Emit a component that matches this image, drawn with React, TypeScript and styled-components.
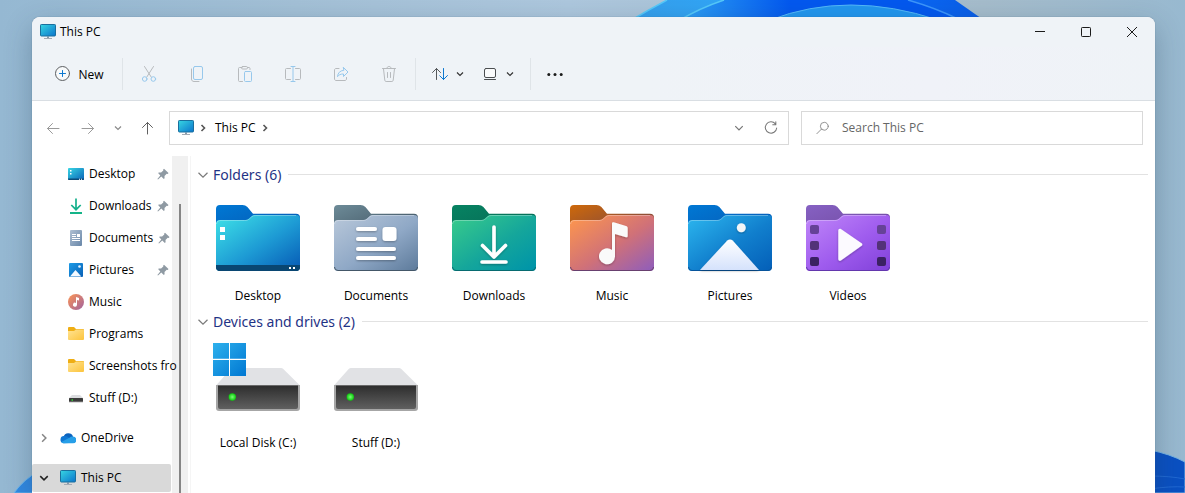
import React from 'react';
import styled, { createGlobalStyle } from 'styled-components';

const GlobalStyle = createGlobalStyle`
  *, *::before, *::after { box-sizing: border-box; }
  html, body { margin: 0; height: 100%; overflow: hidden; }
  body {
    font-family: 'Segoe UI', 'Open Sans', 'Noto Sans', sans-serif;
    font-size: 12px;
    line-height: 16px;
    color: #000;
  }
  button, input { font: inherit; color: inherit; }
  svg { display: block; flex: none; }
`;

/* ---------- layout ---------- */

const Desktop = styled.div`
  position: relative;
  display: flex;
  height: 100vh;
  padding: 17px 30px 0 32px;
  overflow: hidden;
  background: linear-gradient(90deg, #95b8d2 0%, #a3c0d6 25%, #adc7dd 48%, #a5bccb 83%, #98b9d0 100%);
`;

const Wallpaper = styled.svg`
  position: absolute;
  inset: 0;
  width: 100%;
  height: 100%;
`;

const Window = styled.main`
  position: relative;
  flex: 1;
  min-width: 0;
  display: flex;
  flex-direction: column;
  overflow: hidden;
  border-radius: 8px 8px 0 0;
  background: #fff;
  box-shadow: 0 0 1px rgba(60, 90, 115, 0.8), 0 10px 28px rgba(30, 60, 85, 0.32);
`;

const TitleBar = styled.header`
  display: flex;
  align-items: center;
  height: 30px;
  flex: none;
  background: #eff3f7;
`;

const WindowTitle = styled.h1`
  flex: 1;
  display: flex;
  align-items: center;
  gap: 4px;
  margin: 0;
  padding-left: 8px;
  font-size: 12px;
  font-weight: 400;
`;

const PlainButton = styled.button`
  display: flex;
  align-items: center;
  justify-content: center;
  padding: 0;
  border: 0;
  background: transparent;
`;

const CaptionButton = styled(PlainButton)`
  width: 46px;
  height: 30px;
`;

const Toolbar = styled.div`
  display: flex;
  align-items: center;
  height: 54px;
  flex: none;
  padding-left: 12px;
  background: linear-gradient(90deg, #eff3f7 55%, #f0f2f8 80%, #eff3f7);
  border-bottom: 1px solid #d9dee3;
`;

const ToolButton = styled(PlainButton)<{ $width: number }>`
  width: ${(p) => p.$width}px;
  height: 32px;
  gap: 8px;
`;

const NewButton = styled(ToolButton)`
  margin-right: 6px;
`;

const NewLabel = styled.span`
  padding-top: 2px;
`;

const ToolDivider = styled.span`
  width: 1px;
  height: 32px;
  margin: 0 2px;
  background: #dfe4e8;
`;

const ToolGroup = styled.div`
  display: flex;
  padding: 0 5px;
`;

const AddressRow = styled.div`
  display: flex;
  flex: none;
  padding: 10px 12px 11px 0;
`;

const NavButtons = styled.nav`
  display: flex;
  width: 137px;
  padding-left: 3px;
`;

const NavButton = styled(PlainButton)<{ $width: number }>`
  width: ${(p) => p.$width}px;
  height: 34px;
`;

const AddressBox = styled.div`
  flex: 1;
  display: flex;
  align-items: center;
  height: 34px;
  padding: 0 1px 0 8px;
  border: 1px solid #d9d9d9;
`;

const CrumbArrow = styled.span`
  margin: 0 8px 0 5px;
`;

const Crumb = styled.a`
  color: #000;
  text-decoration: none;
`;

const BoxButton = styled(PlainButton)<{ $push?: boolean }>`
  width: 32px;
  height: 32px;
  margin-left: ${(p) => (p.$push ? 'auto' : '0')};
`;

const SearchBox = styled.label`
  display: flex;
  align-items: center;
  gap: 12px;
  width: 342px;
  height: 34px;
  margin-left: 12px;
  padding-left: 14px;
  border: 1px solid #d9d9d9;
`;

const SearchInput = styled.input`
  flex: 1;
  min-width: 0;
  padding: 0;
  border: 0;
  outline: 0;
  background: transparent;
  &::placeholder { color: #666; opacity: 1; }
`;

const Body = styled.div`
  flex: 1;
  min-height: 0;
  display: flex;
  overflow: hidden;
`;

const Sidebar = styled.nav`
  position: relative;
  width: 140px;
  flex: none;
  padding: 2px 1px 0 0;
`;

const TreeList = styled.ul`
  margin: 0 0 8px;
  padding: 0;
  list-style: none;
`;

const TreeLink = styled.a<{ $nested?: boolean; $selected?: boolean }>`
  display: flex;
  align-items: center;
  gap: 5px;
  height: 28px;
  margin: 2px 0;
  padding-left: ${(p) => (p.$nested ? 36 : 4)}px;
  border-radius: 2px;
  background: ${(p) => (p.$selected ? '#d9d9d9' : 'transparent')};
  color: #000;
  text-decoration: none;
  white-space: nowrap;
`;

const TreeItem = styled.li`
  display: flow-root;
`;

const TreeArrow = styled.span`
  width: 19px;
  display: flex;
  padding-left: 3px;
`;

const PinSlot = styled.span`
  margin-left: auto;
  padding-right: 2px;
`;

const ScrollTrack = styled.div`
  width: 16px;
  flex: none;
  padding: 48px 7px 0;
  background: #f0f0f0;
`;

const ScrollThumb = styled.div`
  width: 2px;
  height: 100%;
  background: #858585;
`;

const Content = styled.section`
  flex: 1;
  min-width: 0;
  margin-left: 2px;
  padding: 4px 7px 0 6px;
  border-left: 1px solid #f5f5f5;
`;

const GroupHeader = styled.h2`
  display: flex;
  align-items: center;
  gap: 4px;
  height: 30px;
  margin: 0;
  padding-bottom: 1px;
  font-family: 'Segoe UI', 'Noto Sans', 'Open Sans', sans-serif;
  font-size: 14px;
  line-height: 20px;
  font-weight: 400;
  color: #1f3385;
  &::after {
    content: '';
    flex: 1;
    height: 1px;
    margin-left: 3px;
    background: #e2e2e2;
  }
`;

const TileGrid = styled.ul`
  display: flex;
  flex-wrap: wrap;
  margin: 0;
  padding: 0 0 0 2px;
  list-style: none;
`;

const Tile = styled.li`
  display: flex;
  flex-direction: column;
  align-items: center;
  width: 118px;
  height: 117px;
`;

const TileLabel = styled.span`
  margin-top: 2px;
`;

/* ---------- small icons ---------- */

const Monitor = ({ id }: { id: string }) => (
  <svg width="16" height="16" viewBox="0 0 16 16" aria-hidden="true">
    <defs>
      <linearGradient id={id} x1="0" y1="0" x2="1" y2="1">
        <stop offset="0" stopColor="#37d6e2" />
        <stop offset="1" stopColor="#0b74cc" />
      </linearGradient>
    </defs>
    <path d="M7 12.500h2v2H7z" fill="#8b99a8" />
    <path d="M4 14h8v1H4z" fill="#a3abb4" />
    <rect x="0.500" y="0.500" width="15" height="11.500" rx="0.800" fill={`url(#${id})`} stroke="#1a6f9d" />
  </svg>
);

const Chevron = ({ dir, size = 8, color = '#444', weight = 1.2 }: {
  dir: 'down' | 'right';
  size?: number;
  color?: string;
  weight?: number;
}) => (
  <svg width={size} height={size} viewBox="0 0 8 8" fill="none" stroke={color} strokeWidth={weight} aria-hidden="true">
    <path d={dir === 'down' ? 'M1 2.500L4 5.500L7 2.500' : 'M2.500 1L5.500 4L2.500 7'} />
  </svg>
);

const gray = '#b7babd';
const sky = '#97c8ec';

const Line = ({ children, size = 16 }: { children: React.ReactNode; size?: number }) => (
  <svg
    width={size}
    height={size}
    viewBox="0 0 16 16"
    fill="none"
    strokeLinecap="round"
    strokeLinejoin="round"
    aria-hidden="true"
  >
    {children}
  </svg>
);

const NewIcon = () => (
  <Line>
    <circle cx="8.500" cy="7.500" r="7" stroke="#5b5e61" fill="#f8fafb" />
    <path d="M8.500 4.500v6M5.500 7.500h6" stroke="#0d78d0" />
  </Line>
);

const CutIcon = () => (
  <Line>
    <path d="M3.500 0.500L10.200 11M12.500 0.500L5.800 11" stroke={gray} />
    <circle cx="3.700" cy="13" r="2.300" stroke={sky} />
    <circle cx="12.300" cy="13" r="2.300" stroke={sky} />
  </Line>
);

const CopyIcon = () => (
  <Line>
    <path d="M2.500 3v10c0 1.500 1 2.500 2.500 2.500h5" stroke={gray} />
    <rect x="4.500" y="0.500" width="9" height="13" rx="1.500" stroke={sky} />
  </Line>
);

const PasteIcon = () => (
  <Line>
    <path d="M5 1.500H2.500c-.6 0-1 .4-1 1v12c0 .6.400 1 1 1h3M10.500 1.500H12c.6 0 1 .4 1 1v1" stroke={gray} />
    <rect x="4.500" y="0.500" width="6" height="2.500" rx="1.200" stroke={gray} />
    <rect x="7.500" y="5.500" width="7" height="10" rx="1" stroke={sky} />
  </Line>
);

const RenameIcon = () => (
  <Line>
    <path d="M5.500 2.500h-4c-.6 0-1 .4-1 1v9c0 .6.400 1 1 1h4M10.500 2.500h4c.6 0 1 .4 1 1v9c0 .6-.4 1-1 1h-4" stroke={gray} />
    <path d="M8 .5v15M6 .5h4M6 15.500h4" stroke={sky} />
  </Line>
);

const ShareIcon = () => (
  <Line>
    <path d="M6 2.500H3c-.8 0-1.500.7-1.500 1.500v9c0 .8.700 1.500 1.500 1.500h9c.8 0 1.500-.7 1.500-1.500v-1.500" stroke={gray} />
    <path d="M10.500 1.500L15 6l-4.500 4.500V8c-3 0-4.700.8-6 2.700.3-3.700 2.400-6 6-6.400z" stroke={sky} />
  </Line>
);

const DeleteIcon = () => (
  <Line>
    <path d="M1.500 2.500h13M6 2.300C6 1 6.800.5 8 .5s2 .5 2 1.800M2.500 2.800l1.300 11.500c.1.700.6 1.200 1.300 1.200h5.800c.7 0 1.200-.5 1.300-1.200l1.300-11.500M6.500 6.500v5M9.500 6.500v5" stroke={gray} />
  </Line>
);

const SortIcon = () => (
  <Line>
    <path d="M4.500 13.500v-11M.5 6.500l4-4 4 4" stroke="#55585b" />
    <path d="M11.500 2.500v11M7.800 9.800l3.700 3.700 4-4" stroke="#0d78d0" />
  </Line>
);

const ViewIcon = () => (
  <Line>
    <rect x="2.500" y="2.500" width="11" height="9" rx="1.500" stroke="#4b4e51" fill="#fafbfc" />
    <path d="M2.500 13.500h11" stroke="#4b4e51" />
  </Line>
);

const MoreIcon = () => (
  <Line>
    <circle cx="1.800" cy="8.500" r="1.500" fill="#1b1b1b" />
    <circle cx="8" cy="8.500" r="1.500" fill="#1b1b1b" />
    <circle cx="14.200" cy="8.500" r="1.500" fill="#1b1b1b" />
  </Line>
);

const PinIcon = () => (
  <svg width="12" height="12" viewBox="0 0 12 12" aria-hidden="true">
    <path
      d="M7 .8l4.500 4.300-.7.900-1.100-.2-2.200 2.300.1 2.100-.8.800-2.500-2.400L1 11.500l-.6-.4 2.900-3.600L1.100 5.100l.8-.7 2.200.1L6.300 2.400l-.1-.9z"
      fill="#8f9aa3"
    />
  </svg>
);

const DesktopSmall = () => (
  <svg width="16" height="16" viewBox="0 0 16 16" aria-hidden="true">
    <defs>
      <linearGradient id="dts" x1="0" y1="0" x2="1" y2="1">
        <stop offset="0" stopColor="#38d6e4" />
        <stop offset="1" stopColor="#0a63b8" />
      </linearGradient>
    </defs>
    <rect y="2" width="16" height="12" rx="1" fill="url(#dts)" />
    <path d="M0 12.500h16V13a1 1 0 0 1-1 1H1a1 1 0 0 1-1-1z" fill="#0b4a78" />
    <path d="M2 4h1.500v1.500H2zM2 7h1.500v1.500H2zM11 12.700h1v1h-1zM13 12.700h1v1h-1z" fill="#fff" />
  </svg>
);

const DownloadsSmall = () => (
  <svg width="16" height="16" viewBox="0 0 16 16" fill="none" aria-hidden="true">
    <path d="M8 0.500v11M3.300 7L8 11.700 12.700 7" stroke="#15b08c" strokeWidth="1.700" />
    <path d="M2 15h12" stroke="#14b488" strokeWidth="1.800" />
  </svg>
);

const DocumentsSmall = () => (
  <svg width="16" height="16" viewBox="0 0 16 16" aria-hidden="true">
    <defs>
      <linearGradient id="dcs" x1="0" y1="0" x2="1" y2="1">
        <stop offset="0" stopColor="#afc0d3" />
        <stop offset="1" stopColor="#6886a8" />
      </linearGradient>
    </defs>
    <rect x="2" width="12" height="16" rx="1" fill="url(#dcs)" />
    <path d="M4 4h4v1H4zM4 6h4v1H4zM4 8h8v1H4zM4 10h8v1H4zM9 4h3v3H9z" fill="#fff" />
  </svg>
);

const PicturesSmall = () => (
  <svg width="16" height="16" viewBox="0 0 16 16" aria-hidden="true">
    <defs>
      <linearGradient id="pcs" x1="0" y1="0" x2="1" y2="1">
        <stop offset="0" stopColor="#1d9be6" />
        <stop offset="1" stopColor="#0960b6" />
      </linearGradient>
    </defs>
    <rect x="1" y="1" width="14" height="14" rx="1" fill="url(#pcs)" />
    <path d="M2 14.500L7.500 8l5.800 6.500z" fill="#f4f9ff" />
    <circle cx="11.500" cy="4.500" r="1.300" fill="#e8f5ff" />
  </svg>
);

const MusicSmall = () => (
  <svg width="16" height="16" viewBox="0 0 16 16" aria-hidden="true">
    <defs>
      <linearGradient id="mss" x1="0" y1="0" x2="1" y2="1">
        <stop offset="0.100" stopColor="#f3905c" />
        <stop offset="1" stopColor="#a0629f" />
      </linearGradient>
    </defs>
    <circle cx="8" cy="8" r="8" fill="url(#mss)" />
    <path d="M8 3l3 1v2.500L9 6v4.800A2 2 0 1 1 8 9z" fill="#fff" />
  </svg>
);

const FolderSmall = ({ id }: { id: string }) => (
  <svg width="16" height="16" viewBox="0 0 16 16" aria-hidden="true">
    <defs>
      <linearGradient id={id} x1="0" y1="0" x2="1" y2="1">
        <stop offset="0" stopColor="#ffe394" />
        <stop offset="1" stopColor="#fcc43c" />
      </linearGradient>
    </defs>
    <path d="M0 2a1 1 0 0 1 1-1h5l2 2h7a1 1 0 0 1 1 1v4H0z" fill="#efae14" />
    <path d="M0 5h6l2-1.500h7a1 1 0 0 1 1 1V13a1 1 0 0 1-1 1H1a1 1 0 0 1-1-1z" fill={`url(#${id})`} />
  </svg>
);

const DriveSmall = () => (
  <svg width="16" height="16" viewBox="0 0 16 16" aria-hidden="true">
    <path d="M4 5h8l3 3H1z" fill="#dcdde0" />
    <rect x="1" y="8" width="14" height="4" rx="0.500" fill="#3b3b3b" />
    <path d="M1 12h14" stroke="#aaa" strokeWidth="0.800" />
    <rect x="3.500" y="9.300" width="1.500" height="1.500" fill="#35d235" />
  </svg>
);

const CloudIcon = () => (
  <svg width="16" height="16" viewBox="0 0 16 16" aria-hidden="true">
    <path d="M3.500 7A5 5 0 0 1 13 6.500L12 10H4z" fill="#0b63be" />
    <path d="M3.700 13.200A3.500 3.500 0 1 1 4.500 6c2 0 3.500.9 5 2.200L9 13z" fill="#1078d4" />
    <path d="M9.400 7.800c1-1 2.200-1.400 3.600-1.200A3.300 3.300 0 0 1 13 13.300H4c-1.200 0-2.200-.5-2.700-1.300z" fill="#279fe8" />
  </svg>
);

/* ---------- large icons ---------- */

interface FolderColors {
  tab: [string, string];
  front: [string, string, string];
  edge: string;
}

const BigFolder = ({ id, colors, children }: { id: string; colors: FolderColors; children: React.ReactNode }) => (
  <svg width="96" height="96" viewBox="0 0 96 96" aria-hidden="true">
    <defs>
      <linearGradient id={`${id}t`} x1="0" y1="0" x2="0.600" y2="0.600">
        <stop offset="0" stopColor={colors.tab[0]} />
        <stop offset="1" stopColor={colors.tab[1]} />
      </linearGradient>
      <linearGradient id={`${id}f`} x1="0" y1="0.100" x2="0.900" y2="1">
        <stop offset="0" stopColor={colors.front[0]} />
        <stop offset="0.550" stopColor={colors.front[1]} />
        <stop offset="1" stopColor={colors.front[2]} />
      </linearGradient>
      <linearGradient id={`${id}s`} x1="0" y1="0" x2="0" y2="1">
        <stop offset="0" stopColor="#fff" />
        <stop offset="1" stopColor="#d5e2fc" />
      </linearGradient>
      <filter id={`${id}d`} x="-20%" y="-20%" width="140%" height="140%">
        <feDropShadow dx="0" dy="1" stdDeviation="1" floodOpacity="0.300" />
      </filter>
    </defs>
    <path d="M6 19a4 4 0 0 1 4-4h22.500c2 0 3.500.7 4.900 2L43 23.700h43a4 4 0 0 1 4 4V50H6z" fill={`url(#${id}t)`} />
    <path
      d="M6 34a4 4 0 0 1 4-4h24.500c2 0 3.300-.4 4.500-1.500l2.300-2.100c1.200-1 2.400-1.400 4-1.400H86a4 4 0 0 1 4 4v48a4 4 0 0 1-4 4H10a4 4 0 0 1-4-4z"
      fill={`url(#${id}f)`}
    />
    <path
      d="M6.500 34a3.500 3.500 0 0 1 3.500-3.500h24.500c2.200 0 3.600-.5 4.900-1.600l2.300-2.100c1.100-.9 2.200-1.300 3.600-1.300H86"
      fill="none"
      stroke="#fff"
      strokeOpacity="0.300"
    />
    <path d="M6.500 77a3.500 3.500 0 0 0 3.500 3.500h76a3.500 3.500 0 0 0 3.500-3.500" fill="none" stroke={colors.edge} />
    {children}
  </svg>
);

const DesktopFolder = () => (
  <BigFolder id="fdesk" colors={{ tab: ['#0078d4', '#0461bb'], front: ['#3bdce6', '#1d9ad4', '#0860b8'], edge: '#0a4468' }}>
    <path d="M6 75h84v2a4 4 0 0 1-4 4H10a4 4 0 0 1-4-4z" fill="#094672" />
    <path d="M10 37h5v5h-5zM10 45h5v5h-5zM79 77h2v2h-2zM83 77h2v2h-2z" fill="#fff" />
  </BigFolder>
);

const DocumentsFolder = () => (
  <BigFolder id="fdoc" colors={{ tab: ['#6d8b98', '#4c6270'], front: ['#b5c5d8', '#8fa8c6', '#627f9f'], edge: '#445768' }}>
    <g filter="url(#fdocd)" fill="#fff">
      <rect x="28" y="37" width="21" height="4" rx="2" />
      <rect x="28" y="47" width="21" height="4" rx="2" />
      <rect x="28" y="57" width="40" height="4" rx="2" />
      <rect x="28" y="66" width="40" height="4" rx="2" />
      <rect x="54.500" y="37" width="14" height="14" rx="3" />
    </g>
  </BigFolder>
);

const DownloadsFolder = () => (
  <BigFolder id="fdown" colors={{ tab: ['#078362', '#067058'], front: ['#36c98c', '#15a69b', '#0095a8'], edge: '#076b70' }}>
    <path
      d="M48 37v30M36.500 55.500L48 67l11.500-11.500M36 72h24"
      fill="none"
      stroke="#fff"
      strokeWidth="3.600"
      strokeLinecap="round"
      strokeLinejoin="round"
      filter="url(#fdownd)"
    />
  </BigFolder>
);

const MusicFolder = () => (
  <BigFolder id="fmus" colors={{ tab: ['#ce690a', '#8f4e36'], front: ['#fb944f', '#d07178', '#955fb5'], edge: '#68406f' }}>
    <path
      d="M48 33.500c0-1 .8-1.500 1.800-1.200L62 36c1 .3 1.700 1 1.700 2v8c0 1-.7 1.500-1.700 1.200L51 44v22.500A8 8 0 1 1 48 60z"
      fill="#fafafa"
      filter="url(#fmusd)"
    />
  </BigFolder>
);

const PicturesFolder = () => (
  <BigFolder id="fpic" colors={{ tab: ['#0078d4', '#0562bd'], front: ['#2ab2ec', '#117fcd', '#0562ba'], edge: '#07549b' }}>
    <path d="M18 80l27.300-29.500c1.400-1.500 4-1.500 5.400 0L77 80z" fill="url(#fpics)" filter="url(#fpicd)" />
    <circle cx="59.300" cy="37.700" r="4.500" fill="#f3f5f7" filter="url(#fpicd)" />
  </BigFolder>
);

const VideosFolder = () => (
  <BigFolder id="fvid" colors={{ tab: ['#8661c3', '#7650a9'], front: ['#bd83f8', '#9f5cee', '#8343db'], edge: '#6337ad' }}>
    {[
      [35, '#664297'],
      [51, '#533278'],
      [67, '#3b2163'],
    ].map(([y, fill]) => (
      <g key={y} fill={String(fill)}>
        <rect x="10" y={y} width="9" height="9" rx="2" />
        <rect x="77" y={y} width="9" height="9" rx="2" />
      </g>
    ))}
    <path
      d="M38.300 40.500c0-1.500 1.300-2.300 2.600-1.500l20.700 14.200c1 .7 1 1.900 0 2.600L40.900 70.500c-1.300.8-2.600 0-2.600-1.500z"
      fill="#fcfaff"
      filter="url(#fvidd)"
    />
  </BigFolder>
);

const DriveIcon = ({ id, system }: { id: string; system?: boolean }) => (
  <svg width="96" height="96" viewBox="0 0 96 96" aria-hidden="true">
    <defs>
      <linearGradient id={`${id}b`} x1="0" y1="0" x2="0" y2="1">
        <stop offset="0" stopColor="#2d2d2d" />
        <stop offset="1" stopColor="#606060" />
      </linearGradient>
      <linearGradient id={`${id}w`} x1="0" y1="0" x2="1" y2="1">
        <stop offset="0" stopColor="#2eb1ed" />
        <stop offset="1" stopColor="#0077d2" />
      </linearGradient>
      <radialGradient id={`${id}l`}>
        <stop offset="0" stopColor="#7bff76" />
        <stop offset="1" stopColor="#0cc80c" />
      </radialGradient>
    </defs>
    <path d="M23 31h48c1 0 1.600.3 2.300.9L90 48.500H6L20.700 31.900c.7-.6 1.300-.9 2.300-.9z" fill="#e1e2e5" />
    <path d="M6 48h84v23a3 3 0 0 1-3 3H9a3 3 0 0 1-3-3z" fill="#a6a6a6" />
    <path d="M8 48.500h80V70a2 2 0 0 1-2 2H10a2 2 0 0 1-2-2z" fill={`url(#${id}b)`} />
    <circle cx="22.300" cy="60" r="3.700" fill={`url(#${id}l)`} />
    {system && (
      <>
        <path d="M3 6h33v33H3z" fill="#fff" fillOpacity="0.900" />
        <path d="M3 6h16v15.700H3zM20 6h16v15.700H20zM3 22.900h16V39H3zM20 22.900h16V39H20z" fill={`url(#${id}w)`} />
      </>
    )}
  </svg>
);

/* ---------- data ---------- */

const quickAccess = [
  { name: 'Desktop', icon: <DesktopSmall />, pinned: true },
  { name: 'Downloads', icon: <DownloadsSmall />, pinned: true },
  { name: 'Documents', icon: <DocumentsSmall />, pinned: true },
  { name: 'Pictures', icon: <PicturesSmall />, pinned: true },
  { name: 'Music', icon: <MusicSmall /> },
  { name: 'Programs', icon: <FolderSmall id="fs1" /> },
  { name: 'Screenshots fro', icon: <FolderSmall id="fs2" /> },
  { name: 'Stuff (D:)', icon: <DriveSmall /> },
];

const folders = [
  { name: 'Desktop', icon: <DesktopFolder /> },
  { name: 'Documents', icon: <DocumentsFolder /> },
  { name: 'Downloads', icon: <DownloadsFolder /> },
  { name: 'Music', icon: <MusicFolder /> },
  { name: 'Pictures', icon: <PicturesFolder /> },
  { name: 'Videos', icon: <VideosFolder /> },
];

const drives = [
  { name: 'Local Disk (C:)', icon: <DriveIcon id="drc" system /> },
  { name: 'Stuff (D:)', icon: <DriveIcon id="drd" /> },
];

const fileActions = [
  { name: 'Cut', icon: <CutIcon /> },
  { name: 'Copy', icon: <CopyIcon /> },
  { name: 'Paste', icon: <PasteIcon /> },
  { name: 'Rename', icon: <RenameIcon /> },
  { name: 'Share', icon: <ShareIcon /> },
  { name: 'Delete', icon: <DeleteIcon /> },
];

const Group = ({ title, items }: { title: string; items: { name: string; icon: React.ReactNode }[] }) => (
  <>
    <GroupHeader>
      <Chevron dir="down" size={12} color="#7a7a7a" weight={0.8} />
      {title}
    </GroupHeader>
    <TileGrid>
      {items.map((item) => (
        <Tile key={item.name}>
          {item.icon}
          <TileLabel>{item.name}</TileLabel>
        </Tile>
      ))}
    </TileGrid>
  </>
);

const Bloom = () => (
  <Wallpaper viewBox="0 0 1185 493" preserveAspectRatio="none" aria-hidden="true">
    <defs>
      <linearGradient id="petal" x1="637" y1="0" x2="980" y2="0" gradientUnits="userSpaceOnUse">
        <stop offset="0" stopColor="#359fec" />
        <stop offset="0.250" stopColor="#31a5f5" />
        <stop offset="0.450" stopColor="#0a62f0" />
        <stop offset="0.700" stopColor="#0a6cf8" />
        <stop offset="1" stopColor="#0a5de6" />
      </linearGradient>
      <linearGradient id="fold" x1="690" y1="0" x2="790" y2="0" gradientUnits="userSpaceOnUse">
        <stop offset="0" stopColor="#2a9af3" />
        <stop offset="1" stopColor="#0358ee" />
      </linearGradient>
    </defs>
    <path d="M630 21Q648 10 667 0H955L985 21z" fill="url(#petal)" />
    <path d="M680 20Q700 8 724 0H908Q940 9 958 20z" fill="url(#fold)" />
    <path d="M630 21Q648 10 667 0M680 20Q700 8 724 0" fill="none" stroke="#55c8f8" strokeWidth="1.500" />
    <path d="M908 0Q936 8 958 19" fill="none" stroke="#3c95fa" strokeWidth="1.500" />
    <path d="M770 20Q848 -10 938 20z" fill="#2296ee" stroke="#54b8f8" />
    <path d="M14 493Q23 480 40 470V493z" fill="#3289e2" stroke="#6bb8f0" />
    <path d="M1150 450Q1170 454 1185 462V493H1150z" fill="#0a50c2" stroke="#76b4e4" />
    <path d="M1150 476Q1170 476 1185 479M1150 489Q1170 486 1185 487" fill="none" stroke="#2068d2" />
  </Wallpaper>
);

export default function App() {
  return (
    <Desktop>
      <GlobalStyle />
      <Bloom />
      <Window>
        <TitleBar>
          <WindowTitle>
            <Monitor id="m1" />
            This PC
          </WindowTitle>
          <CaptionButton aria-label="Minimize">
            <svg width="10" height="10" viewBox="0 0 10 10" stroke="#1b1b1b">
              <path d="M0 4.500h10" />
            </svg>
          </CaptionButton>
          <CaptionButton aria-label="Maximize">
            <svg width="10" height="10" viewBox="0 0 10 10" fill="none" stroke="#1b1b1b">
              <rect x="0.500" y="0.500" width="9" height="9" rx="0.800" />
            </svg>
          </CaptionButton>
          <CaptionButton aria-label="Close">
            <svg width="10" height="10" viewBox="0 0 10 10" stroke="#1b1b1b">
              <path d="M0 0L10 10M10 0L0 10" />
            </svg>
          </CaptionButton>
        </TitleBar>

        <Toolbar>
          <NewButton $width={70}>
            <NewIcon />
            <NewLabel>New</NewLabel>
          </NewButton>
          <ToolDivider />
          {fileActions.map((action) => (
            <ToolButton key={action.name} $width={48} aria-label={action.name} disabled>
              {action.icon}
            </ToolButton>
          ))}
          <ToolDivider />
          <ToolGroup>
            <ToolButton $width={50} aria-label="Sort">
              <SortIcon />
              <Chevron dir="down" color="#333" />
            </ToolButton>
            <ToolButton $width={50} aria-label="View">
              <ViewIcon />
              <Chevron dir="down" color="#333" />
            </ToolButton>
          </ToolGroup>
          <ToolDivider />
          <ToolButton $width={44} aria-label="See more">
            <MoreIcon />
          </ToolButton>
        </Toolbar>

        <AddressRow>
          <NavButtons aria-label="History">
            <NavButton $width={36} aria-label="Back">
              <Line>
                <path d="M14 8.500H2.500M7.500 3.500l-5 5 5 5" stroke="#9a9a9a" />
              </Line>
            </NavButton>
            <NavButton $width={34} aria-label="Forward">
              <Line>
                <path d="M2 8.500h11.500M8.500 3.500l5 5-5 5" stroke="#9a9a9a" />
              </Line>
            </NavButton>
            <NavButton $width={26} aria-label="Recent locations">
              <Chevron dir="down" color="#8a8a8a" />
            </NavButton>
            <NavButton $width={32} aria-label="Up">
              <Line>
                <path d="M8.500 14V2.500M3.500 7.500l5-5 5 5" stroke="#606060" />
              </Line>
            </NavButton>
          </NavButtons>
          <AddressBox>
            <Monitor id="m2" />
            <CrumbArrow>
              <Chevron dir="right" color="#555" weight={1.6} />
            </CrumbArrow>
            <Crumb href="#">This PC</Crumb>
            <CrumbArrow>
              <Chevron dir="right" color="#555" weight={1.6} />
            </CrumbArrow>
            <BoxButton $push aria-label="Previous locations">
              <Chevron dir="down" size={10} color="#777" weight={1} />
            </BoxButton>
            <BoxButton aria-label="Refresh">
              <Line size={14}>
                <path d="M13 3.200A6.500 6.500 0 1 0 14.500 8M13.500.8v3.400H10" stroke="#777" strokeWidth="1.200" />
              </Line>
            </BoxButton>
          </AddressBox>
          <SearchBox>
            <Line size={14}>
              <circle cx="9.500" cy="6" r="4.500" stroke="#858585" />
              <path d="M6.300 9.200L1 14.500" stroke="#858585" />
            </Line>
            <SearchInput type="text" placeholder="Search This PC" aria-label="Search This PC" />
          </SearchBox>
        </AddressRow>

        <Body>
          <Sidebar aria-label="Locations">
            <TreeList>
              {quickAccess.map((item) => (
                <TreeItem key={item.name}>
                  <TreeLink href="#" $nested>
                    {item.icon}
                    {item.name}
                    {item.pinned && (
                      <PinSlot>
                        <PinIcon />
                      </PinSlot>
                    )}
                  </TreeLink>
                </TreeItem>
              ))}
            </TreeList>
            <TreeList>
              <TreeItem>
                <TreeLink href="#">
                  <TreeArrow>
                    <Chevron dir="right" size={10} color="#858585" />
                  </TreeArrow>
                  <CloudIcon />
                  OneDrive
                </TreeLink>
              </TreeItem>
            </TreeList>
            <TreeList>
              <TreeItem>
                <TreeLink href="#" $selected>
                  <TreeArrow>
                    <Chevron dir="down" size={10} color="#222" />
                  </TreeArrow>
                  <Monitor id="m3" />
                  This PC
                </TreeLink>
              </TreeItem>
            </TreeList>
          </Sidebar>
          <ScrollTrack>
            <ScrollThumb />
          </ScrollTrack>
          <Content>
            <Group title="Folders (6)" items={folders} />
            <Group title="Devices and drives (2)" items={drives} />
          </Content>
        </Body>
      </Window>
    </Desktop>
  );
}
